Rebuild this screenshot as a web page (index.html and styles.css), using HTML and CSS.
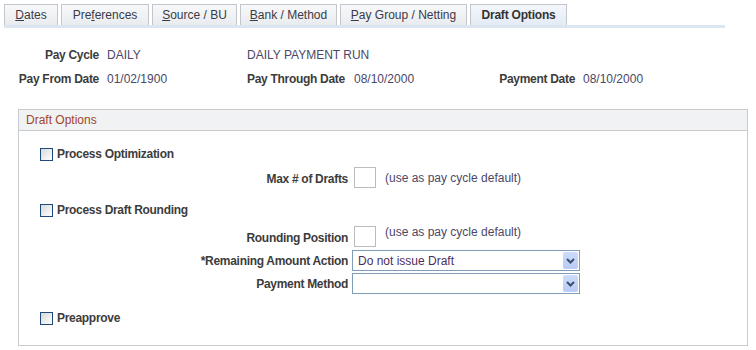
FILE: index.html
```html
<!doctype html>
<html lang="en">
  <head>
    <meta charset="UTF-8" />
    <meta name="viewport" content="width=device-width, initial-scale=1.0" />
    <title>Draft Options</title>
    <link rel="stylesheet" href="styles.css">
  </head>
  <body>
    <div class="tabs">
      <a class="tab t-dates"><u>D</u>ates</a>
      <a class="tab t-prefs">Pre<u>f</u>erences</a>
      <a class="tab t-source"><u>S</u>ource / BU</a>
      <a class="tab t-bank"><u>B</u>ank / Method</a>
      <a class="tab t-pay"><u>P</u>ay Group / Netting</a>
      <a class="tab t-draft active">Draft Options</a>
    </div>

    <div class="header">
      <span class="lbl c1">Pay Cycle</span>
      <span class="val c2">DAILY</span>
      <span class="val c3">DAILY PAYMENT RUN</span>

      <span class="lbl c1">Pay From Date</span>
      <span class="val c2">01/02/1900</span>
      <span class="lbl c3">Pay Through Date</span>
      <span class="val c4">08/10/2000</span>
      <span class="lbl c5">Payment Date</span>
      <span class="val c6">08/10/2000</span>
    </div>

    <div class="group">
      <div class="group-title">Draft Options</div>
      <div class="group-body">
        <label class="check row-opt"><span class="box"></span>Process Optimization</label>

        <div class="field row-max">
          <span class="flabel">Max # of Drafts</span>
          <span class="input"></span>
          <span class="hint">(use as pay cycle default)</span>
        </div>

        <label class="check row-round"><span class="box"></span>Process Draft Rounding</label>

        <div class="field row-pos">
          <span class="flabel">Rounding Position</span>
          <span class="input"></span>
          <span class="hint up">(use as pay cycle default)</span>
        </div>

        <div class="field sel row-remain">
          <span class="flabel">*Remaining Amount Action</span>
          <span class="select">Do not issue Draft<span class="drop"><svg width="9" height="6" viewBox="0 0 9 6"><path d="M1 1 L4.5 4.5 L8 1" fill="none" stroke="#3c4e6c" stroke-width="2"/></svg></span></span>
        </div>

        <div class="field sel row-method">
          <span class="flabel">Payment Method</span>
          <span class="select"><span class="drop"><svg width="9" height="6" viewBox="0 0 9 6"><path d="M1 1 L4.5 4.5 L8 1" fill="none" stroke="#3c4e6c" stroke-width="2"/></svg></span></span>
        </div>

        <label class="check row-pre"><span class="box"></span>Preapprove</label>
      </div>
    </div>
  </body>
</html>
```

FILE: styles.css
```css
body {
  margin: 0;
  font-family: "Liberation Sans", Arial, sans-serif;
  font-size: 12px;
  color: #333;
  background: #fff;
}

/* tab strip */
.tabs {
  display: flex;
  gap: 3px;
  margin: 4px 0 0 4px;
  width: 721px;
  height: 21px;
  border-bottom: 3px solid #dce6f1;
}

.tab {
  display: flex;
  align-items: center;
  justify-content: center;
  height: 20px;
  border: 1px solid #c3c7cc;
  border-bottom: 0;
  background: linear-gradient(#f7f8f9, #e9ecef);
  color: #3a3a48;
  text-decoration: none;
}

.tab u {
  text-decoration: underline;
}

.t-dates { width: 52px; }
.t-prefs { width: 86px; }
.t-source { width: 83px; }
.t-bank { width: 95px; }
.t-pay { width: 125px; }
.t-draft { width: 95px; }

.tab.active {
  background: linear-gradient(#f4f7fb, #e3ebf5);
  font-weight: bold;
  letter-spacing: -0.2px;
  color: #333;
}

/* header fields */
.header {
  display: grid;
  grid-template-columns: 99px 148px 97px 152px 79px auto;
  row-gap: 10px;
  margin-top: 20px;
  line-height: 14px;
  white-space: nowrap;
}

.lbl {
  font-weight: bold;
  letter-spacing: -0.3px;
  color: #3c3c3c;
  text-align: right;
}

.val {
  color: #4b4866;
}

.c1 { grid-column: 1; }
.c2 { grid-column: 2; padding-left: 8px; }
.c3 { grid-column: 3; text-align: left; }
.header .val.c3 { grid-column: 3 / span 2; }
.c4 { grid-column: 4; padding-left: 10px; }
.c5 { grid-column: 5; }
.c6 { grid-column: 6; padding-left: 8px; }

/* group box */
.group {
  margin: 23px 8px 0 18px;
  border: 1px solid #c9cccf;
  height: 235px;
}

.group-title {
  height: 20px;
  line-height: 20px;
  padding-left: 7px;
  background: #f0f2f4;
  border-bottom: 1px solid #c9cccf;
  color: #a2452a;
}

.group-body {
  display: flex;
  flex-direction: column;
  padding-left: 21px;
  white-space: nowrap;
}

.check {
  display: flex;
  align-items: center;
  gap: 4px;
  font-weight: bold;
  letter-spacing: -0.3px;
  color: #3c3c3c;
  height: 14px;
}

.box {
  width: 11px;
  height: 11px;
  border: 1px solid #1d4a7a;
  background: linear-gradient(135deg, #d8d8d8, #ffffff);
}

.row-opt { margin-top: 16px; }
.row-round { margin-top: 15px; }
.row-pre { margin-top: 17px; }

.field {
  display: flex;
  align-items: flex-end;
}

.flabel {
  width: 308px;
  text-align: right;
  font-weight: bold;
  letter-spacing: -0.3px;
  color: #3c3c3c;
  padding-right: 6px;
  line-height: 14px;
  margin-bottom: 2px;
}

.input {
  width: 20px;
  height: 19px;
  border: 1px solid #bcbcbc;
  background: #fff;
}

.hint {
  align-self: center;
  margin-left: 9px;
  color: #4b4866;
}

.hint.up {
  align-self: flex-start;
  margin-top: -1px;
}

.row-max { margin-top: 6px; }
.row-pos { margin-top: 9px; }

.field.sel {
  align-items: center;
}

.field.sel .flabel {
  margin-bottom: 0;
  padding-right: 4px;
}

.row-remain { margin-top: 3px; }
.row-method { margin-top: 2px; }

.select {
  position: relative;
  display: flex;
  align-items: center;
  width: 221px;
  height: 19px;
  padding-left: 5px;
  border: 1px solid #7f9db9;
  color: #4b2e5c;
}

.drop {
  position: absolute;
  right: 1px;
  top: 1px;
  width: 15px;
  height: 17px;
  display: flex;
  align-items: center;
  justify-content: center;
  background: linear-gradient(#cddcfc, #b7cbf6);
  border-radius: 2px;
}
```
